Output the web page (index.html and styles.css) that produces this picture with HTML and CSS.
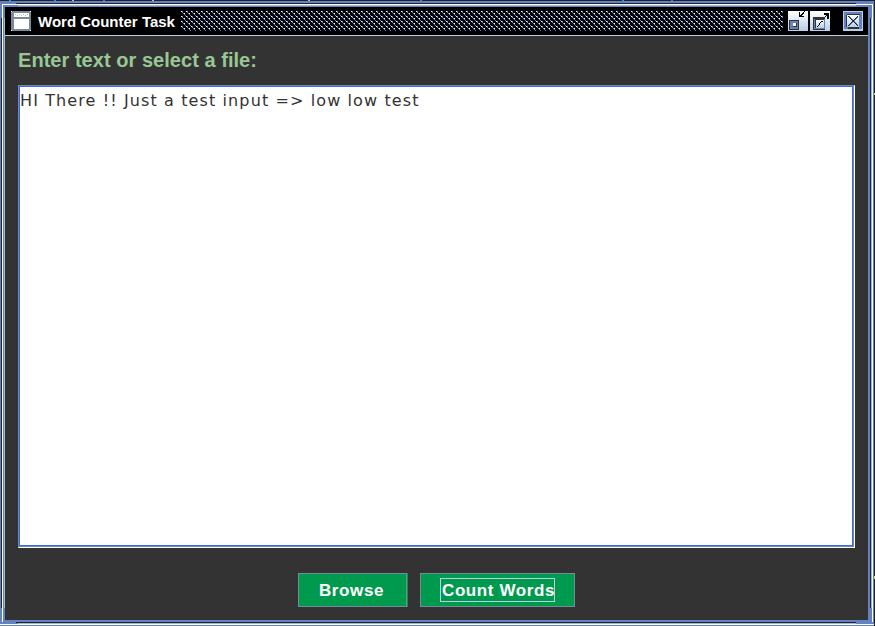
FILE: index.html
```html
<!DOCTYPE html>
<html lang="en">
<head>
<meta charset="utf-8">
<title>Word Counter Task</title>
<link rel="stylesheet" href="styles.css">
</head>
<body>
<div class="window">
  <svg class="frame" width="875" height="626" shape-rendering="crispEdges">
    <path fill="#20222b" d="M0 0h875v1H0z"/>
    <path fill="#20222b" d="M874 0h1v626h-1z"/>
    <path fill="#6382bf" d="M0 1h874v625H0zM5 7v613h863V7z" fill-rule="evenodd"/>
    <path fill="#20222b" d="M16 3h840v1H16zM1 18h1v590H1zM870 18h1v590h-1zM16 622h840v1H16z"/>
    <path fill="#fff" d="M2 4h870v1H2zM2 4h1v618H2zM872 4h1v618h-1zM0 624h874v1H0z"/>
    <path fill="#a3b8cc" d="M18 5h838v1H18zM4 18h1v590H4zM871 18h1v590h-1zM18 623h838v1H18z"/>
    <path fill="#2196f3" d="M9 0h2v1H9zM54 0h2v1h-2zM420 0h2v1h-2zM622 0h2v1h-2z"/>
    <path fill="#a64ac9" d="M103 0h2v1h-2zM671 0h2v1h-2z"/>
    <path fill="#c8b790" d="M72 0h2v1h-2zM152 0h2v1h-2zM308 0h2v1h-2z"/>
    <path fill="#c9e34a" d="M874 576h1v3h-1zM874 93h1v2h-1z"/>
  </svg>
  <header class="titlebar">
    <svg class="icon" width="20" height="20" shape-rendering="crispEdges">
      <path fill="#7a8a99" d="M0 0h20v20H0z"/><path fill="#fff" d="M3 2h15v4H3zM3 8h15v10H3zM0 0h1v1H0zM19 0h1v1h-1zM0 19h1v1H0zM19 19h1v1h-1z"/>
      <path fill="#a3b8cc" d="M4 3h1v1H4zM6 4h1v1H6zM8 3h1v1H8zM10 4h1v1h-1zM12 3h1v1h-1zM14 4h1v1h-1zM16 3h1v1h-1z"/>
    </svg>
    <h1 class="title">Word Counter Task</h1>
    <svg class="grip" width="602" height="20" shape-rendering="crispEdges">
      <defs><pattern id="bumps" width="5" height="5" patternUnits="userSpaceOnUse"><path fill="#fff" d="M0 0h1v1H0zM3 2h1v1H3z"/><path fill="#6382bf" d="M1 0h1v1H1zM1 1h1v1H1zM2 2h1v1H2zM3 3h1v1H3zM4 4h1v1H4z"/></pattern></defs>
      <path fill="url(#bumps)" d="M0 0h602v20H0z"/>
    </svg>
    <svg class="control" width="20" height="20" shape-rendering="crispEdges">
      <defs><linearGradient id="metal" x2="0" y2="1"><stop stop-color="#fff"/><stop offset="1" stop-color="#b8cfe5"/></linearGradient></defs>
      <path fill="url(#metal)" d="M0 0h20v20H0z"/><path fill="#333" d="M1 9h10v10H1z"/><path fill="#6382bf" d="M2 10h8v8H2z"/><path fill="#333" d="M5 12h4v4H5z"/><path fill="#fff" d="M5 12h3v3H5z"/>
      <path fill="#000" d="M11 1h1v5h-1zM11 5h5v1h-5zM12 4h2v1h-2zM13 3h2v1h-2zM14 2h2v1h-2zM15 1h1v1h-1zM16 0h1v1h-1z"/>
    </svg>
    <svg class="control maximize" width="20" height="20" shape-rendering="crispEdges">
      <path fill="url(#metal)" d="M0 0h20v20H0z"/><path fill="#333" d="M3 6h12v13H3z"/><path fill="#6382bf" d="M4 8h11v10H4z"/><path fill="#333" d="M5 8h9v9H5z"/><path fill="url(#metal)" d="M6 9h8v8H6z"/>
      <path fill="#000" d="M7 15h1v1H7zM8 14h1v1H8zM9 12h1v2H9zM10 11h1v1h-1zM11 10h2v1h-2zM15 5h1v1h-1zM16 4h1v1h-1zM14 2h5v2h-5zM17 2h2v6h-2z"/>
    </svg>
    <svg class="control close" width="20" height="20" shape-rendering="crispEdges">
      <path fill="#b8cfe5" d="M0 0h20v20H0z"/><path fill="#6382bf" d="M1 1h18v17H1z"/><path fill="#333" d="M4 3h13v1H4zM3 4h1v12H3zM5 16h11v2H5z"/><path fill="url(#metal)" d="M4 4h12v12H4z"/>
      <path stroke="#6382bf" stroke-width="1.4" fill="none" d="M6 5l9 9M15 6l-9 9"/>
      <path stroke="#222" stroke-width="1.4" fill="none" d="M5 5l10 10M15 5L5 15"/>
    </svg>
  </header>
  <main class="content">
    <label class="prompt" for="source">Enter text or select a file:</label>
    <div class="field"><textarea id="source" class="source" spellcheck="false">HI There !! Just a test input =&gt; low low test</textarea></div>
    <div class="actions">
      <button class="button browse">Browse</button>
      <button class="button count"><span class="focus">Count Words</span></button>
    </div>
  </main>
</div>
</body>
</html>
```
FILE: styles.css
```css
* { box-sizing: border-box; }
body { margin: 0; overflow: hidden; background: #fff; font-family: "Liberation Sans", Arial, sans-serif; }
.window { position: relative; width: 875px; height: 626px; padding: 7px 7px 6px 5px; }
.frame { position: absolute; left: 0; top: 0; pointer-events: none; }
svg { display: block; flex: none; }
.titlebar { display: flex; height: 29px; padding: 4px 0 0 6px; background: #000; border-bottom: 1px solid #b8cfe5; }
.title { width: 143px; margin: 0 0 0 7px; color: #fff; font-size: 15px; line-height: 21px; font-weight: bold; white-space: nowrap; }
.control { margin-left: 5px; }
.maximize { margin-left: 2px; }
.close { margin-left: 13px; }
.content { display: flex; flex-direction: column; height: 584px; padding: 12px 13px 0; background: #333; }
.prompt { height: 37px; color: #98c793; font-size: 20px; line-height: 24px; font-weight: bold; letter-spacing: .04px; }
.field { height: 463px; padding: 0 1px 1px 0; border: 1px solid; border-color: #7a8a99 #fff #fff #7a8a99; box-shadow: inset -1px -1px #7a8a99; }
.source { display: block; width: 100%; height: 100%; margin: 0; padding: 3px 0 0; border: 1px solid #3366ff; outline: none; resize: none; background: #fff; color: #333; font: 16px/21px "DejaVu Sans", sans-serif; letter-spacing: 1.11px; }
.actions { display: flex; justify-content: center; gap: 12px; margin-top: 25px; }
.button { height: 34px; padding: 0; border: 1px solid #7a8a99; border-radius: 0; background: #009a4e; color: #fff; font: bold 17px/22px "Liberation Sans", sans-serif; letter-spacing: .6px; }
.browse { width: 109px; margin-right: 1px; padding: 1px 2px 0 0; box-shadow: 1px 0 #009a4e; }
.count { width: 155px; }
.focus { display: block; width: 115px; height: 24px; margin: 0 auto; padding-left: 1px; border: 1px solid #b8cfe5; line-height: 24px; text-align: left; white-space: nowrap; }
```
